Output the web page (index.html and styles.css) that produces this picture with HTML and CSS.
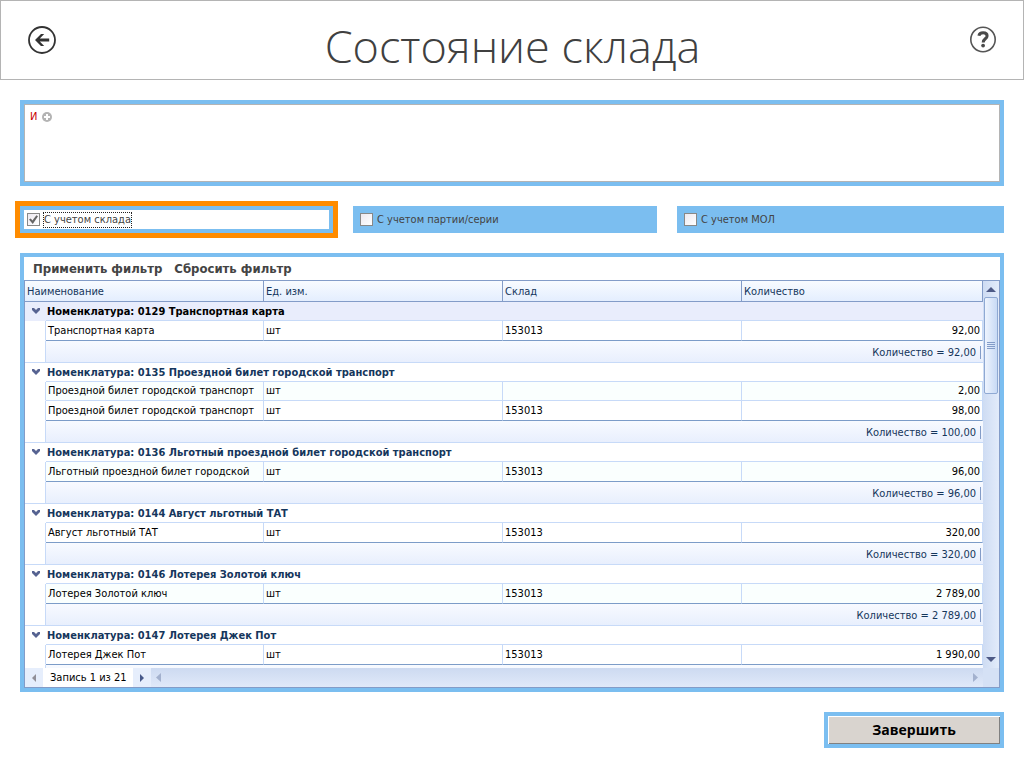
FILE: index.html
```html
<!DOCTYPE html>
<html lang="ru">
<head>
<meta charset="utf-8">
<title>Состояние склада</title>
<link rel="stylesheet" href="styles.css">
</head>
<body>
<header class="topbar">
  <button class="round-btn" type="button" aria-label="Назад">
    <svg width="28" height="28" viewBox="0 0 28 28"><circle cx="14" cy="14" r="13" fill="none" stroke="#333" stroke-width="1.8"/><path d="M7 14 L13 8 H16.2 L11.8 12.6 H21.2 V15.4 H11.8 L16.2 20 H13 Z" fill="#333"/></svg>
  </button>
  <h1 class="title">Состояние склада</h1>
  <button class="round-btn" type="button" aria-label="Справка">
    <svg width="28" height="28" viewBox="0 0 28 28"><circle cx="14" cy="13.5" r="12.2" fill="none" stroke="#555" stroke-width="1.6"/><path d="M9.9 9.8 C10.4 7.4 12 6.8 14.1 6.8 C16.6 6.8 18.1 8 18.1 9.9 C18.1 12.8 14.2 12.8 14.2 16.4" fill="none" stroke="#4a4a4a" stroke-width="3"/><circle cx="14.1" cy="19.6" r="1.9" fill="#4a4a4a"/></svg>
  </button>
</header>
<main class="page">
  <section class="filter-box">
    <div class="filter-inner">
      <button class="op" type="button">И</button>
      <button class="plus" type="button" aria-label="Добавить условие">
        <svg width="10" height="10" viewBox="0 0 10 10"><circle cx="5" cy="5" r="5" fill="#b4b4b4"/><path d="M5 2V8M2 5H8" stroke="#fff" stroke-width="2"/></svg>
      </button>
    </div>
  </section>
  <div class="options">
    <label class="option option-active"><input class="check" type="checkbox" checked><span class="option-text">С учетом склада</span></label>
    <label class="option option-mid"><input class="check" type="checkbox"><span class="option-text">С учетом партии/серии</span></label>
    <label class="option option-last"><input class="check" type="checkbox"><span class="option-text">С учетом МОЛ</span></label>
  </div>
  <section class="panel">
    <div class="toolbar">
      <button class="tool" type="button">Применить фильтр</button>
      <button class="tool" type="button">Сбросить фильтр</button>
    </div>
    <div class="grid">
      <div class="grid-view">
        <table class="data">
          <colgroup><col class="c-indent"><col class="c-name"><col class="c-unit"><col class="c-store"><col></colgroup>
          <thead>
            <tr><th colspan="2">Наименование</th><th>Ед. изм.</th><th>Склад</th><th>Количество</th></tr>
          </thead>
          <tbody>
            <tr class="group group-current"><td class="toggle"><svg width="8" height="6" viewBox="0 0 8 6"><path d="M0 0H2L4 2L6 0H8V2L4 6L0 2Z" fill="#566391"/></svg></td><td colspan="4">Номенклатура: 0129 Транспортная карта</td></tr>
            <tr class="row last"><td class="indent"></td><td>Транспортная карта</td><td>шт</td><td>153013</td><td class="num">92,00</td></tr>
            <tr class="sum"><td class="indent"></td><td colspan="4"><span class="total">Количество = 92,00</span></td></tr>
          </tbody>
          <tbody>
            <tr class="group"><td class="toggle"><svg width="8" height="6" viewBox="0 0 8 6"><path d="M0 0H2L4 2L6 0H8V2L4 6L0 2Z" fill="#566391"/></svg></td><td colspan="4">Номенклатура: 0135 Проездной билет городской транспорт</td></tr>
            <tr class="row tint"><td class="indent"></td><td>Проездной билет городской транспорт</td><td>шт</td><td></td><td class="num">2,00</td></tr>
            <tr class="row last"><td class="indent"></td><td>Проездной билет городской транспорт</td><td>шт</td><td>153013</td><td class="num">98,00</td></tr>
            <tr class="sum"><td class="indent"></td><td colspan="4"><span class="total">Количество = 100,00</span></td></tr>
          </tbody>
          <tbody>
            <tr class="group"><td class="toggle"><svg width="8" height="6" viewBox="0 0 8 6"><path d="M0 0H2L4 2L6 0H8V2L4 6L0 2Z" fill="#566391"/></svg></td><td colspan="4">Номенклатура: 0136 Льготный проездной билет городской транспорт</td></tr>
            <tr class="row tint last"><td class="indent"></td><td>Льготный проездной билет городской</td><td>шт</td><td>153013</td><td class="num">96,00</td></tr>
            <tr class="sum"><td class="indent"></td><td colspan="4"><span class="total">Количество = 96,00</span></td></tr>
          </tbody>
          <tbody>
            <tr class="group"><td class="toggle"><svg width="8" height="6" viewBox="0 0 8 6"><path d="M0 0H2L4 2L6 0H8V2L4 6L0 2Z" fill="#566391"/></svg></td><td colspan="4">Номенклатура: 0144 Август льготный ТАТ</td></tr>
            <tr class="row last"><td class="indent"></td><td>Август льготный ТАТ</td><td>шт</td><td>153013</td><td class="num">320,00</td></tr>
            <tr class="sum"><td class="indent"></td><td colspan="4"><span class="total">Количество = 320,00</span></td></tr>
          </tbody>
          <tbody>
            <tr class="group"><td class="toggle"><svg width="8" height="6" viewBox="0 0 8 6"><path d="M0 0H2L4 2L6 0H8V2L4 6L0 2Z" fill="#566391"/></svg></td><td colspan="4">Номенклатура: 0146 Лотерея Золотой ключ</td></tr>
            <tr class="row tint last"><td class="indent"></td><td>Лотерея Золотой ключ</td><td>шт</td><td>153013</td><td class="num">2 789,00</td></tr>
            <tr class="sum"><td class="indent"></td><td colspan="4"><span class="total">Количество = 2 789,00</span></td></tr>
          </tbody>
          <tbody>
            <tr class="group"><td class="toggle"><svg width="8" height="6" viewBox="0 0 8 6"><path d="M0 0H2L4 2L6 0H8V2L4 6L0 2Z" fill="#566391"/></svg></td><td colspan="4">Номенклатура: 0147 Лотерея Джек Пот</td></tr>
            <tr class="row last"><td class="indent"></td><td>Лотерея Джек Пот</td><td>шт</td><td>153013</td><td class="num">1 990,00</td></tr>
            <tr class="sum"><td class="indent"></td><td colspan="4"></td></tr>
          </tbody>
        </table>
      </div>
      <div class="vbar">
        <svg class="arrow" width="10" height="5" viewBox="0 0 10 5"><path d="M0 5L5 0L10 5Z" fill="#4e5a86"/></svg>
        <div class="thumb"><svg width="8" height="7" viewBox="0 0 8 7" shape-rendering="crispEdges"><path d="M0 .5H8M0 2.5H8M0 4.5H8M0 6.5H8" stroke="#839cc8"/></svg></div>
        <svg class="arrow" width="10" height="5" viewBox="0 0 10 5"><path d="M0 0L5 5L10 0Z" fill="#4e5a86"/></svg>
      </div>
      <div class="navbar">
        <button class="nav" type="button" aria-label="Предыдущая запись"><svg width="4" height="8" viewBox="0 0 4 8"><path d="M4 0L0 4L4 8Z" fill="#918f98"/></svg></button>
        <span class="record">Запись 1 из 21</span>
        <button class="nav" type="button" aria-label="Следующая запись"><svg width="4" height="8" viewBox="0 0 4 8"><path d="M0 0L4 4L0 8Z" fill="#47598a"/></svg></button>
        <div class="hbar">
          <svg width="5" height="9" viewBox="0 0 5 9"><path d="M5 0L0 4.5L5 9Z" fill="#a3b1ce"/></svg>
          <svg width="5" height="9" viewBox="0 0 5 9"><path d="M0 0L5 4.5L0 9Z" fill="#a3b1ce"/></svg>
        </div>
      </div>
      <div class="corner"></div>
    </div>
  </section>
  <div class="actions">
    <button class="finish" type="button">Завершить</button>
  </div>
</main>
</body>
</html>
```
FILE: styles.css
```css
* {
  box-sizing: border-box;
}

body {
  margin: 0;
  height: 100vh;
  display: flex;
  flex-direction: column;
  background: #fff;
  color: #000;
  font-family: "DejaVu Sans Condensed", "DejaVu Sans", sans-serif;
  font-stretch: condensed;
  font-size: 11px;
  line-height: 14px;
}

button {
  margin: 0;
  padding: 0;
  border: 0;
  background: none;
  color: inherit;
  font: inherit;
}

svg {
  display: block;
}

.topbar {
  flex: none;
  display: flex;
  align-items: center;
  justify-content: space-between;
  height: 80px;
  padding: 0 26px 0 27px;
  border: 1px solid #b4b4b4;
}

.title {
  margin: 0;
  padding-top: 12px;
  color: #404040;
  font-family: "Open Sans", "Noto Sans", sans-serif;
  font-stretch: normal;
  font-size: 45px;
  font-weight: 300;
  line-height: 64px;
}

.page {
  flex: 1;
  min-height: 0;
  display: flex;
  flex-direction: column;
  gap: 20px;
  padding: 20px;
}

.filter-box {
  flex: none;
  border: 4px solid #7bbef0;
}

.filter-inner {
  display: flex;
  align-items: flex-start;
  gap: 5px;
  height: 78px;
  padding: 5px;
  border: 1px solid #b4b4b4;
}

.op {
  color: #c80000;
}

.plus {
  padding-top: 2px;
}

.options {
  flex: none;
  display: grid;
  grid-template-columns: 313fr 304fr 327fr;
  gap: 20px;
}

.option {
  display: flex;
  align-items: center;
  gap: 3px;
  height: 27px;
  padding: 0 7px;
  background: #7bbef0;
  color: #444;
}

.option-active {
  padding: 0 3px;
  border: 4px solid #7bbef0;
  outline: 5px solid #ff8c00;
  background: #fff;
}

.check {
  appearance: none;
  display: grid;
  place-items: center;
  width: 13px;
  height: 13px;
  margin: 0;
  border: 1px solid #888;
  background: linear-gradient(135deg, #ede9f0, #fff);
}

.check:checked::before {
  content: "";
  width: 9px;
  height: 9px;
  background: #666;
  clip-path: polygon(0 50%, 20% 38%, 38% 62%, 82% 2%, 100% 14%, 42% 100%);
}

.option-text {
  border: 1px solid transparent;
}

.option-active .option-text {
  border: 1px dotted #222;
}

.panel {
  flex: 1;
  min-height: 0;
  display: flex;
  flex-direction: column;
  border: 4px solid #7bbef0;
}

.toolbar {
  flex: none;
  display: flex;
  align-items: center;
  gap: 12px;
  height: 23px;
  padding: 0 9px;
}

.tool {
  color: #444;
  font-size: 13px;
  font-weight: bold;
  line-height: 18px;
}

.grid {
  flex: 1;
  min-height: 0;
  display: grid;
  grid-template-columns: 1fr 16px;
  grid-template-rows: 1fr 19px;
  border: 1px solid #839cc8;
}

.grid-view {
  min-height: 0;
  overflow: hidden;
}

.data {
  width: 100%;
  table-layout: fixed;
  border-collapse: separate;
  border-spacing: 0;
}

.c-indent {
  width: 21px;
}

.c-name {
  width: 218px;
}

.c-unit,
.c-store {
  width: 239px;
}

.data th,
.data td {
  padding: 0 2px;
  overflow: hidden;
  text-align: left;
  white-space: nowrap;
}

.data th {
  height: 21px;
  padding-top: 2px;
  border-right: 1px solid #839cc8;
  border-bottom: 1px solid #839cc8;
  background: linear-gradient(#f8fbff, #e4eefe);
  color: #15365c;
  font-weight: normal;
}

.data .group td {
  height: 19px;
  padding-top: 2px;
  padding-left: 1px;
  border-bottom: 1px solid #c7daf8;
  color: #15365c;
  font-weight: bold;
}

.data .group-current td {
  background: #e9edfc;
  color: #000;
}

.data .group .toggle {
  padding: 0 0 0 7px;
  border-bottom-color: transparent;
}

.data .group-current .toggle {
  border-bottom-color: #e9edfc;
}

.row td {
  height: 19px;
  border-right: 1px solid #c7daf8;
  border-bottom: 1px solid #c7daf8;
}

.tint td:not(.indent) {
  background: #fafffe;
}

.last td {
  height: 20px;
  border-bottom-color: #7c9cc8;
}

.data .num {
  text-align: right;
}

.data .indent {
  border-right: 1px solid #c7daf8;
  border-bottom-color: transparent;
}

.data .sum td {
  height: 22px;
  padding-top: 2px;
  border-bottom: 1px solid #c7daf8;
}

.data .sum td:last-child {
  background: linear-gradient(#f8faff, #e8effd);
  color: #15365c;
  text-align: right;
}

.total {
  padding-right: 4px;
  border-right: 1px solid #839cc8;
}

.vbar {
  display: flex;
  flex-direction: column;
  align-items: center;
  gap: 5px;
  padding: 6px 1px;
  background: linear-gradient(90deg, #cedcf3, #e2ebfa);
}

.arrow {
  flex: none;
}

.thumb {
  display: grid;
  place-items: center;
  width: 14px;
  height: 97px;
  margin-bottom: auto;
  border: 1px solid #8fa9d3;
  border-radius: 2px;
  background: linear-gradient(90deg, #eef4fe, #c8daf5);
}

.navbar {
  display: flex;
  min-width: 0;
}

.nav {
  display: grid;
  place-items: center;
  width: 18px;
  background: #e6eefc;
}

.record {
  padding: 3px 6px 0 7px;
}

.hbar {
  flex: 1;
  display: flex;
  align-items: center;
  justify-content: space-between;
  padding: 0 5px;
  background: linear-gradient(#cddaf1, #e0e9f9);
}

.corner {
  background: #d5e1f5;
}

.actions {
  flex: none;
  display: flex;
  justify-content: flex-end;
}

.finish {
  width: 180px;
  height: 36px;
  border: 4px solid #7bbef0;
  background: #d9d4cf;
  box-shadow: inset 1px 1px #fff, inset -1px -1px #808080;
  font-family: "Open Sans", "Noto Sans", sans-serif;
  font-stretch: normal;
  font-size: 14px;
  font-weight: bold;
  line-height: 22px;
}
```
